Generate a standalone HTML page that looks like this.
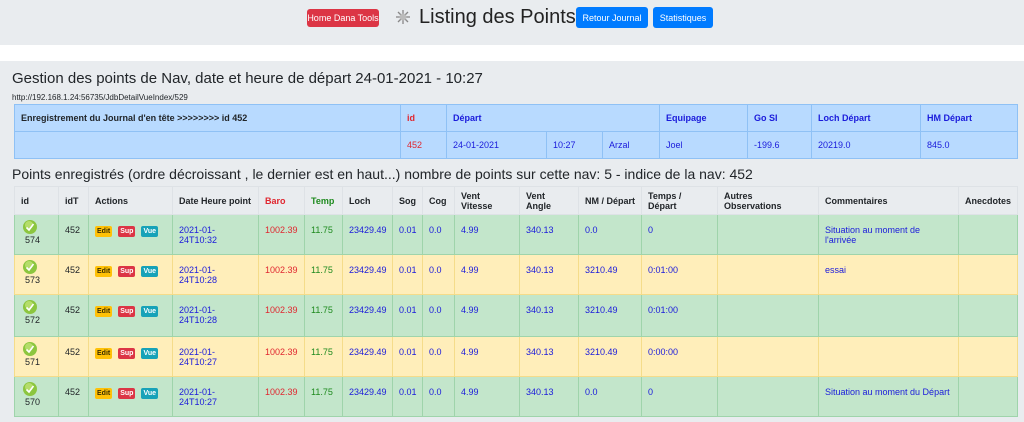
<!DOCTYPE html>
<html><head><meta charset="utf-8"><style>
*{box-sizing:border-box;margin:0;padding:0}
body{width:1024px;height:422px;overflow:hidden;background:#e9ecef;font-family:"Liberation Sans",sans-serif;color:#212529;position:relative}
.top{height:45px;background:#e9ecef;position:relative}
.gap{position:absolute;top:45px;left:0;width:1024px;height:16px;background:#fff}
.btn{position:absolute;color:#fff;border-radius:3px;font-size:9px;display:flex;align-items:center;justify-content:center}
h1{position:absolute;left:419px;top:6px;font-size:20px;font-weight:normal;color:#222}
.t{position:absolute;left:12px;font-weight:normal}
table{position:absolute;left:14px;border-collapse:collapse;table-layout:fixed;font-size:9px}
td,th{padding:0 6px;text-align:left;vertical-align:top}
.jt td,.jt th{border:1px solid #8fc1f5;background:#b8daff;height:27px;vertical-align:middle}
.jt th{font-weight:bold}
.b{color:#1a1adb}.r{color:#e0262f}.g{color:#1e8a1e}
.pt th{background:#e9ecef;height:28px;vertical-align:middle;border:1px solid #dee2e6;font-weight:bold}
.pt td{padding-top:10px}
.gr td{background:#c3e6cb;border:1px solid #9fd4ab;border-top:1px solid #b1dfbb}
.ye td{background:#ffeeba;border:1px solid #f5dc8a}
.bd{display:inline-block;font-size:7px;padding:1px 2px;border-radius:2px;margin-right:6px;font-weight:bold;line-height:9px}
.e{background:#ffc107;color:#3a2e00}.s{background:#dc3545;color:#fff}.v{background:#17a2b8;color:#fff}
</style></head><body>
<div class="top">
<div class="btn" style="left:307px;top:9px;width:72px;height:18px;background:#dc3545">Home Dana Tools</div>
<svg style="position:absolute;left:396px;top:10px" width="14" height="14" viewBox="0 0 14 14"><g stroke="#888" stroke-width="1.3"><line x1="7" y1="0" x2="7" y2="14"/><line x1="0" y1="7" x2="14" y2="7"/><line x1="2" y1="2" x2="12" y2="12"/><line x1="12" y1="2" x2="2" y2="12"/></g><circle cx="7" cy="7" r="3.5" fill="#bbb"/></svg>
<h1>Listing des Points</h1>
<div class="btn" style="left:576px;top:7px;width:72px;height:21px;background:#007bff">Retour Journal</div>
<div class="btn" style="left:653px;top:7px;width:60px;height:21px;background:#007bff">Statistiques</div>
</div>
<div class="gap"></div>
<div class="t" style="top:70px;font-size:15px">Gestion des points de Nav, date et heure de départ 24-01-2021 - 10:27</div>
<div class="t" style="top:93px;font-size:8px">http://192.168.1.24:56735/JdbDetailVueIndex/529</div>
<table class="jt" style="top:104px;width:1003px">
<colgroup><col style="width:386px"><col style="width:46px"><col style="width:100px"><col style="width:56px"><col style="width:57px"><col style="width:88px"><col style="width:64px"><col style="width:109px"><col style="width:97px"></colgroup>
<tr><th>Enregistrement du Journal d'en tête &gt;&gt;&gt;&gt;&gt;&gt;&gt;&gt; id 452</th><th class="r">id</th><th class="b" colspan="3" style="border-right:none">Départ</th><th class="b">Equipage</th><th class="b">Go SI</th><th class="b">Loch Départ</th><th class="b">HM Départ</th></tr>
<tr><td></td><td class="r">452</td><td class="b">24-01-2021</td><td class="b">10:27</td><td class="b">Arzal</td><td class="b">Joel</td><td class="b">-199.6</td><td class="b">20219.0</td><td class="b">845.0</td></tr>
</table>
<div class="t" style="top:166px;font-size:14px">Points enregistrés (ordre décroissant , le dernier est en haut...) nombre de points sur cette nav: 5 - indice de la nav: 452</div>
<table class="pt" style="top:186px;width:1003px">
<colgroup><col style="width:44px"><col style="width:30px"><col style="width:84px"><col style="width:86px"><col style="width:46px"><col style="width:38px"><col style="width:50px"><col style="width:30px"><col style="width:32px"><col style="width:65px"><col style="width:59px"><col style="width:63px"><col style="width:76px"><col style="width:101px"><col style="width:140px"><col style="width:59px"></colgroup>
<tr><th>id</th><th>idT</th><th>Actions</th><th>Date Heure point</th><th class="r">Baro</th><th class="g">Temp</th><th>Loch</th><th>Sog</th><th>Cog</th><th>Vent Vitesse</th><th>Vent Angle</th><th>NM / Départ</th><th>Temps / Départ</th><th>Autres Observations</th><th>Commentaires</th><th>Anecdotes</th></tr>
<tr class="gr" style="height:40px"><td ID1>574</td><td>452</td><td>A</td><td class="b">2021-01-24T10:32</td><td class="r">1002.39</td><td class="g">11.75</td><td class="b">23429.49</td><td class="b">0.01</td><td class="b">0.0</td><td class="b">4.99</td><td class="b">340.13</td><td class="b">0.0</td><td class="b">0</td><td></td><td class="b">Situation au moment de l'arrivée</td><td></td></tr>
<tr class="ye" style="height:40px"><td ID1>573</td><td>452</td><td>A</td><td class="b">2021-01-24T10:28</td><td class="r">1002.39</td><td class="g">11.75</td><td class="b">23429.49</td><td class="b">0.01</td><td class="b">0.0</td><td class="b">4.99</td><td class="b">340.13</td><td class="b">3210.49</td><td class="b">0:01:00</td><td></td><td class="b">essai</td><td></td></tr>
<tr class="gr" style="height:42px"><td ID1>572</td><td>452</td><td>A</td><td class="b">2021-01-24T10:28</td><td class="r">1002.39</td><td class="g">11.75</td><td class="b">23429.49</td><td class="b">0.01</td><td class="b">0.0</td><td class="b">4.99</td><td class="b">340.13</td><td class="b">3210.49</td><td class="b">0:01:00</td><td></td><td></td><td></td></tr>
<tr class="ye" style="height:40px"><td ID1>571</td><td>452</td><td>A</td><td class="b">2021-01-24T10:27</td><td class="r">1002.39</td><td class="g">11.75</td><td class="b">23429.49</td><td class="b">0.01</td><td class="b">0.0</td><td class="b">4.99</td><td class="b">340.13</td><td class="b">3210.49</td><td class="b">0:00:00</td><td></td><td></td><td></td></tr>
<tr class="gr" style="height:40px"><td ID1>570</td><td>452</td><td>A</td><td class="b">2021-01-24T10:27</td><td class="r">1002.39</td><td class="g">11.75</td><td class="b">23429.49</td><td class="b">0.01</td><td class="b">0.0</td><td class="b">4.99</td><td class="b">340.13</td><td class="b">0.0</td><td class="b">0</td><td></td><td class="b">Situation au moment du Départ</td><td></td></tr>
</table>
<script>
document.querySelectorAll('td[ID1]').forEach(function(td){
 var n=td.textContent;td.style.paddingTop='5px';
 td.innerHTML='<svg width="14" height="14" viewBox="0 0 14 14" style="display:block;margin-left:2px"><circle cx="7" cy="7" r="7" fill="#8cc63f"/><circle cx="6" cy="5" r="4" fill="#b5dd6a"/><path d="M3.5 7.5 L6 10 L10.5 4" stroke="#fff" stroke-width="1.6" fill="none"/></svg><div style="margin-left:4px;margin-top:1px">'+n+'</div>';
});
document.querySelectorAll('tr td:nth-child(3)').forEach(function(td){
 if(td.textContent==='A')td.innerHTML='<span class="bd e">Edit</span><span class="bd s">Sup</span><span class="bd v">Vue</span>';
});
</script>
</body></html>
